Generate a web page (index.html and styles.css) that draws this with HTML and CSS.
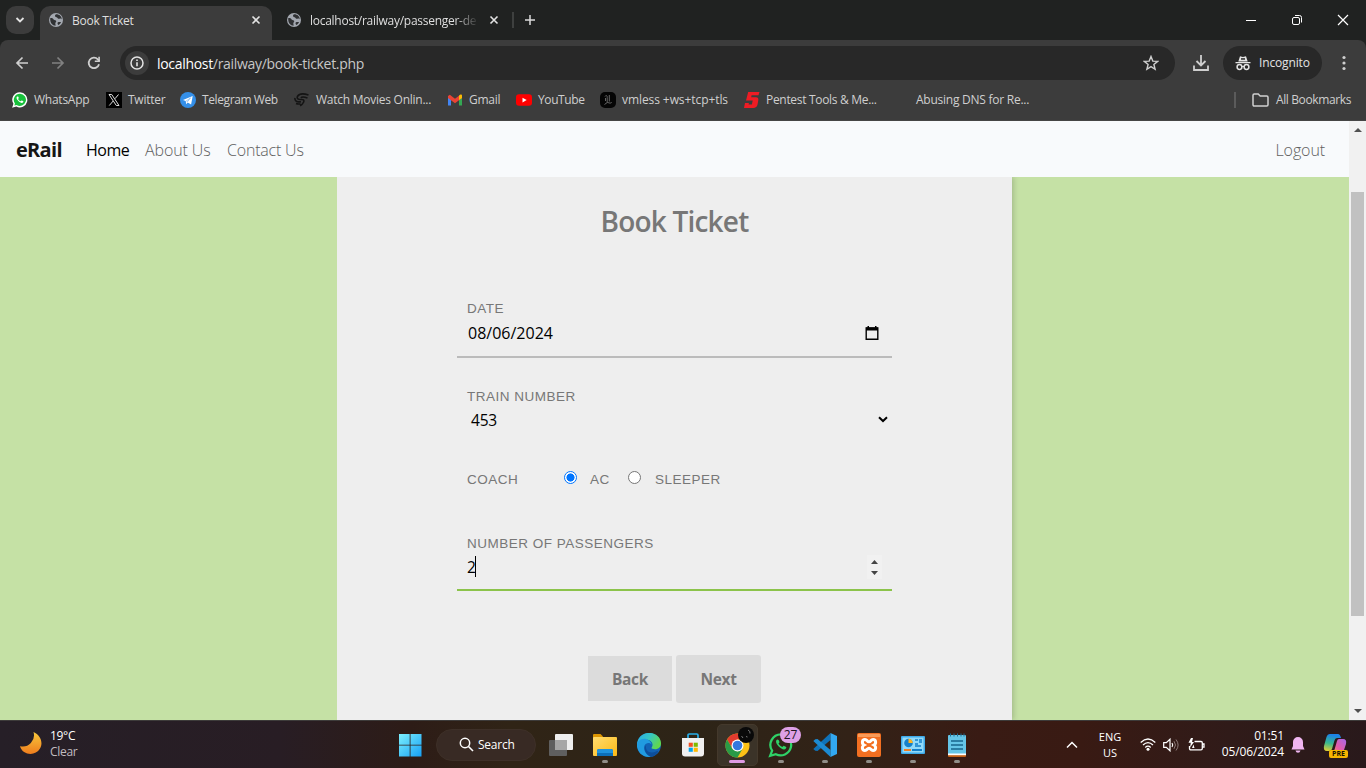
FILE: index.html
```html
<!DOCTYPE html>
<html lang="en">
<head>
<meta charset="utf-8">
<title>Book Ticket</title>
<link rel="stylesheet" href="styles.css">
</head>
<body>
<svg class="defs" width="0" height="0">
  <defs>
    <symbol id="globe" viewBox="0 0 14 14"><circle cx="7" cy="7" r="7" fill="#a3a8b0"/><path d="M1.200 5.200c1.600-.3 2.500.2 3.400 1.200 1 .9 2.400.4 2.600 1.500.2 1-.9 1.300-.9 2.300 0 .8.4 1.500.3 2.500C3.400 12.500 1 10 1.200 5.200zM7 1.300c-.8.9-1.300 1.300-.8 2.200.6.9 2 .5 2.300 1.400.3.8 1.700 1.100 2.500.7.8-.4 1.400 0 1.700.8.1-2.900-2.300-5.200-5.700-5.100zM9 9.300c1-.4 2.200 0 3-.4-.4 1.300-1.400 2.500-2.700 3-.7-.8-1.200-2-.3-2.600z" fill="#303234"/></symbol>
    <symbol id="cross" viewBox="0 0 10 10"><path d="M1.500 1.500l7 7M8.500 1.500l-7 7" stroke="#e3e3e3" stroke-width="1.600" fill="none"/></symbol>
    <symbol id="phone" viewBox="1.300 1.300 21.600 21.600"><path d="M12 1.500A10.300 10.300 0 0 0 3.200 17.200L1.500 22.600l5.600-1.600A10.300 10.300 0 1 0 12 1.500z" fill="#fff"/><path d="M12.100 3.700A8.200 8.200 0 0 0 5.300 16.700l-.8 2.900 3-.8A8.200 8.200 0 1 0 12.100 3.700z" fill="#18c13c"/><path d="M8.500 7.300c-1.700.7-1.400 3.200 1.200 5.900 2.600 2.800 5.300 3.700 6.600 2.100.6-.8.500-1.400-.1-1.700l-2-.9-1.200 1.200c-1.700-.7-2.800-1.900-3.500-3.200l1-1.300-.9-2z" fill="#fff"/></symbol>
    <linearGradient id="win" x1="0" y1="0" x2="1" y2="1"><stop offset="0" stop-color="#7df0fd"/><stop offset="1" stop-color="#16a0f5"/></linearGradient>
    <linearGradient id="moon" x1="0" y1="0" x2="0" y2="1"><stop offset="0" stop-color="#f8c83c"/><stop offset="1" stop-color="#ef7d1d"/></linearGradient>
    <linearGradient id="folder" x1="0" y1="0" x2="1" y2="1"><stop offset="0" stop-color="#ffdc70"/><stop offset="1" stop-color="#fcb915"/></linearGradient>
    <linearGradient id="edgeTop" x1="0" y1="0" x2="1" y2=".5"><stop offset="0" stop-color="#2aa8e8"/><stop offset=".5" stop-color="#35c6c5"/><stop offset="1" stop-color="#61d84c"/></linearGradient>
    <linearGradient id="copA" x1=".2" y1="0" x2="0" y2="1"><stop offset="0" stop-color="#1c83e8"/><stop offset=".5" stop-color="#38b98e"/><stop offset="1" stop-color="#f2d12c"/></linearGradient>
    <linearGradient id="copB" x1="1" y1="0" x2="0" y2="1"><stop offset="0" stop-color="#a768ea"/><stop offset=".6" stop-color="#e65ba5"/><stop offset="1" stop-color="#f89a4d"/></linearGradient>
  </defs>
</svg>

<header class="tabs">
  <button class="tab-search"><svg width="10" height="8" viewBox="0 0 10 8"><path d="M1.500 2l3.500 3.500L8.500 2" fill="none" stroke="#e3e3e3" stroke-width="1.800"/></svg></button>
  <div class="tab active"><svg class="fav"><use href="#globe"/></svg><span class="t-active">Book Ticket</span><svg class="close"><use href="#cross"/></svg></div>
  <div class="tab"><svg class="fav"><use href="#globe"/></svg><span class="fade">localhost/railway/passenger-de</span><svg class="close"><use href="#cross"/></svg></div>
  <i class="tab-rule"></i>
  <svg class="plus" width="12" height="12" viewBox="0 0 12 12"><path d="M6 1v10M1 6h10" stroke="#dadada" stroke-width="1.500"/></svg>
  <div class="window-buttons">
    <svg width="12" height="12" viewBox="0 0 12 12"><path d="M1 6.500h10" stroke="#fff"/></svg>
    <svg width="12" height="12" viewBox="0 0 12 12"><rect x="1.500" y="3.500" width="7" height="7" rx="1.500" fill="none" stroke="#fff"/><path d="M4 1.500h4.500a2 2 0 0 1 2 2V8.500" fill="none" stroke="#fff"/></svg>
    <svg width="12" height="12" viewBox="0 0 12 12"><path d="M1 1l10 10M11 1L1 11" stroke="#fff" stroke-width="1.200"/></svg>
  </div>
</header>

<div class="toolbar">
  <svg class="tool" viewBox="0 0 14 14"><path d="M7.500 1.500L2 7l5.500 5.500M2 7h11" fill="none" stroke="#cfcfcf" stroke-width="1.700"/></svg>
  <svg class="tool" viewBox="0 0 14 14"><path d="M6.500 1.500L12 7l-5.500 5.500M12 7H1" fill="none" stroke="#818181" stroke-width="1.700"/></svg>
  <svg class="tool" viewBox="0 0 14 14"><path d="M12 8.200A5.200 5.200 0 1 1 10.800 3.400L12.500 5" fill="none" stroke="#cfcfcf" stroke-width="1.800"/><path d="M12.900.8v5.100H7.800V4.500h3.500V.8z" fill="#cfcfcf"/></svg>
  <div class="omnibox">
    <span class="info"><svg width="14" height="14" viewBox="0 0 14 14"><circle cx="7" cy="7" r="6" fill="none" stroke="#e3e3e3" stroke-width="1.500"/><path d="M7 6.200v4M7 3.500v1.500" stroke="#e3e3e3" stroke-width="1.600"/></svg></span>
    <span class="url"><b>localhost</b>/railway/book-ticket.php</span>
    <svg class="star" width="16" height="16" viewBox="0 0 16 16"><path d="M8 1.500l1.800 4.600 4.900.3-3.800 3.100 1.200 4.800L8 11.600l-4.100 2.700 1.200-4.800-3.800-3.100 4.900-.3z" fill="none" stroke="#cfcfcf" stroke-width="1.400"/></svg>
  </div>
  <svg class="download" width="18" height="18" viewBox="0 0 18 18"><path d="M9 1v10.500M4.500 7L9 11.500 13.500 7M2 11.500V16h14v-4.500" fill="none" stroke="#cfcfcf" stroke-width="1.800"/></svg>
  <div class="incognito"><svg width="16" height="16" viewBox="0 0 16 16"><path d="M3.300 6.500L5 1.200l3 .8 3-.8 1.700 5.300zM.5 6.900h15v1.300H.5z" fill="#e3e3e3"/><path d="M6 3.200h4v1.500H6z" fill="#282828"/><circle cx="4.500" cy="12" r="2.400" fill="none" stroke="#e3e3e3" stroke-width="1.500"/><circle cx="11.500" cy="12" r="2.400" fill="none" stroke="#e3e3e3" stroke-width="1.500"/><path d="M6.800 11.700q1.200-.8 2.400 0" stroke="#e3e3e3" fill="none"/></svg><span>Incognito</span></div>
  <svg class="menu" width="4" height="16" viewBox="0 0 4 16"><g fill="#cfcfcf"><circle cx="2" cy="2.500" r="1.600"/><circle cx="2" cy="8" r="1.600"/><circle cx="2" cy="13.500" r="1.600"/></g></svg>
</div>

<nav class="bookmarks">
  <a class="b1"><svg><use href="#phone"/></svg><span>WhatsApp</span></a>
  <a class="b2"><svg viewBox="0 0 16 16"><path d="M0 0h16v16H0z" fill="#000"/><path d="M3 2.500h2.700l7.300 11h-2.700zM12.500 2.500L9 6.700M7.200 9L3.300 13.500" fill="none" stroke="#ddd" stroke-width="1"/></svg><span>Twitter</span></a>
  <a class="b3"><svg viewBox="0 0 16 16"><circle cx="8" cy="8" r="8" fill="#348fe8"/><path d="M3 8l9.700-4-1.600 8.500-3.400-2-1.500 1.700-.5-3.100z" fill="#fff"/><path d="M6 9.200l4.600-3.400-3.400 4.300" stroke="#9ec9f4" fill="none"/></svg><span>Telegram Web</span></a>
  <a class="b4"><svg viewBox="0 0 16 16"><path d="M14.500 3C9 1.200 5 2 3.600 4.200 2.300 6.700 4.500 7.700 7 7.500c2.500-.2 3.500.8 2.500 2.800-.7 1.600-2 2.700-3.400 3.500M13.500 6C10 4.800 7.500 4.800 7 6M1 6c-.5 3 2 4.500 6 3.700M2 11.500c1.500.6 3 .7 4.500.2" fill="none" stroke="#141414" stroke-width="1.600"/></svg><span>Watch Movies Onlin...</span></a>
  <a class="b5"><svg viewBox="0 0 16 16"><path d="M1 4v9.500h3V7z" fill="#4285f4"/><path d="M12 7v6.500h3V4z" fill="#34a853"/><path d="M1 4v2l7 5.200L15 6V3.700L13.200 2.800 8 6.800 2.800 2.800z" fill="#ea4335"/><path d="M12 3.700v4.400L15 6V3.800c0-1.600-1.700-1.900-3-.1z" fill="#fbbc04"/></svg><span>Gmail</span></a>
  <a class="b6"><svg viewBox="0 0 16 16"><rect y="2.300" width="16" height="11.500" rx="3" fill="#f00"/><path d="M6.500 5.700v4.800L10.700 8z" fill="#fff"/></svg><span>YouTube</span></a>
  <a class="b7"><svg viewBox="0 0 16 16"><rect width="16" height="16" rx="5" fill="#050505"/><path d="M5 4.500c.5-1.500 2.700-1 2.200.8v5.200c1-.3 2.500 1.500 4.500 0M4.500 12.500l2.700-2M9.300 3v6.500M5.500 6v3" fill="none" stroke="#666" stroke-width="1"/></svg><span>vmless +ws+tcp+tls</span></a>
  <a class="b8"><svg viewBox="0 0 16 16"><path d="M4.200 0H15.500l-1 3.300H7.600l-.4 2h4.700c2 0 2.700 1 2.400 2.900l-.7 4C13.100 14.800 11.500 16 9.300 16H0l1-5h3.900l-.3 1.500h3.300l.8-4H2z" fill="#ee1c24"/></svg><span>Pentest Tools &amp; Me...</span></a>
  <a class="b9"><span>Abusing DNS for Re...</span></a>
  <i class="mark-rule"></i>
  <a class="all"><svg viewBox="0 0 17 14"><path d="M1 2.200Q1 1 2.200 1h4l2 2h6.600Q16 3 16 4.200v7.600q0 1.200-1.200 1.200H2.200Q1 13 1 11.800z" fill="none" stroke="#cfcfcf" stroke-width="1.500"/></svg><span>All Bookmarks</span></a>
</nav>

<section class="viewport">
  <div class="page">
    <nav class="site-nav"><a class="brand">eRail</a><a class="home">Home</a><a class="about">About Us</a><a class="contact">Contact Us</a><a class="logout">Logout</a></nav>
    <main class="backdrop">
      <form class="card">
        <h2>Book Ticket</h2>
        <div class="field date"><label>DATE</label><div class="value"><span class="date-text">08/06/2024</span><svg class="cal" width="14" height="15" viewBox="0 0 14 15"><path d="M1.200 2h11.600v11.300H1.200z" fill="none" stroke="#000" stroke-width="1.400"/><path d="M1 1.500h12v3H1zM2.500 0h1.500v2H2.500zM10 0h1.500v2H10z"/></svg></div></div>
        <div class="field train"><label>TRAIN NUMBER</label><div class="value"><span class="train-text">453</span><svg class="caret" width="10" height="7" viewBox="0 0 10 7"><path d="M1 1.200l4 3.800 4-3.800" fill="none" stroke="#000" stroke-width="2"/></svg></div></div>
        <div class="coach"><label>COACH</label><i class="radio checked"></i><label class="ac">AC</label><i class="radio"></i><label class="sleeper">SLEEPER</label></div>
        <div class="field count"><label>NUMBER OF PASSENGERS</label><div class="value"><span>2</span><i class="cursor"></i><span class="spinner"><svg width="7" height="15" viewBox="0 0 7 15"><path d="M0 4L3.500 0 7 4zM0 11l3.500 4L7 11z" fill="#444"/></svg></span></div></div>
        <div class="actions"><span class="btn back">Back</span><span class="btn next">Next</span></div>
      </form>
    </main>
  </div>
  <aside class="scrollbar"><i class="up"></i><i class="thumb"></i><i class="down"></i></aside>
</section>

<footer class="taskbar">
  <div class="weather"><svg width="24" height="24" viewBox="0 0 24 24"><path d="M14.500 1A11.300 11.300 0 0 1 1 15.200C3.500 24 16 26 21 17.600 24.500 11.500 21.500 4 14.500 1z" fill="url(#moon)"/></svg><div><p class="temp">19°C</p><p class="sky">Clear</p></div></div>
  <div class="apps">
    <div class="app"><svg width="24" height="24"><path d="M1 1h10.700v10.700H1zM12.500 1h11v10.700h-11zM1 12.500h10.700v11H1zM12.500 12.500h11v11h-11z" fill="url(#win)"/></svg></div>
    <div class="search"><svg width="15" height="15" viewBox="0 0 15 15"><circle cx="6" cy="6" r="4.700" fill="none" stroke="#fff" stroke-width="1.500"/><path d="M9.500 9.500l4.500 4.500" stroke="#fff" stroke-width="1.600"/></svg><span>Search</span></div>
    <div class="app"><svg width="24" height="24"><rect x="6" y="1" width="18" height="16" rx="1" fill="#eee"/><rect y="7" width="18" height="16" rx="1" fill="#5f5f5f"/><path d="M6 7h12v10H6z" fill="#a6a6a6"/></svg></div>
    <div class="app open"><svg width="24" height="24"><path d="M0 2q0-1 1-1h6.500l2.500 2.500V7H0z" fill="#dc9502"/><rect y="4" width="24" height="19" rx="1" fill="url(#folder)"/><path d="M4 23v-5q0-2 2-2h12q2 0 2 2v5z" fill="#0c6fb8"/><path d="M4 20v-2q0-2 2-2h12q2 0 2 2v2z" fill="#1f93dd"/></svg></div>
    <div class="app"><svg width="24" height="24"><circle cx="12" cy="12" r="12" fill="#1263b5"/><path d="M0 12C.5-4 23-3.500 24 10c.2 5-4 7-8.300 5.800-1.800-.5-1-1.300-.5-2.300C17 9 11.500 5.200 7 7.500 3 9.400 1.500 13 3.500 17 1.500 15.700 0 14 0 12z" fill="url(#edgeTop)"/><path d="M0 12c0-4 5-7.200 9.500-5.800 3 .9 5 3 5.100 5.700-1.200-2.500-5.800-2.600-7.200.8-1.500 4 1.600 9.400 6.600 11.100C5.500 24.800 0 19 0 12z" fill="#219be0"/><path d="M9.300 11.800c-2 5.700 3.800 10 10.200 6.500.8-.4 2-.2 1.500.6A11.500 11.500 0 0 1 14.800 24C9 22.500 5.500 15.500 9.300 11.800z" fill="#0d4e9b"/></svg></div>
    <div class="app"><svg width="24" height="24"><path d="M7 6V2.200Q7 1 8.200 1h7.600Q17 1 17 2.200V6" fill="none" stroke="#28afea" stroke-width="1.700"/><path d="M1 5h22v15.500q0 3-3 3H4q-3 0-3-3z" fill="#f0f0f0"/><path d="M7.700 9.700h4.100v4.100H7.700z" fill="#f25022"/><path d="M12.700 9.700h4.100v4.100h-4.100z" fill="#7fba00"/><path d="M7.700 14.700h4.100v4.100H7.700z" fill="#00a4ef"/><path d="M12.700 14.700h4.100v4.100h-4.100z" fill="#ffb900"/></svg></div>
    <div class="app open current"><svg class="chrome" width="28" height="28" viewBox="0 0 28 28"><circle cx="13.500" cy="15.500" r="12" fill="#fbc116"/><path d="M3.100 9.500A12 12 0 0 1 23.900 9.500H13.500L8.300 18.500z" fill="#e33b2e"/><path d="M3.100 9.500A12 12 0 0 0 13.500 27.500l5.200-9-5.200 3-5.200-3z" fill="#299b47"/><circle cx="13.500" cy="15.500" r="6" fill="#fff"/><circle cx="13.500" cy="15.500" r="4.800" fill="#3478df"/></svg><svg class="avatar" width="16" height="16" viewBox="0 0 16 16"><circle cx="8" cy="8" r="8" fill="#090909"/><path d="M10 3q2.500 1 2 3.500M3.500 9l1.500 2M8 9.500l1.500.5" stroke="#777" fill="none"/></svg></div>
    <div class="app open"><svg width="26" height="26" viewBox="0 0 24 24"><path d="M12 2.200A9.700 9.700 0 0 0 3.800 17.200L2 22l5.200-1.500A9.700 9.700 0 1 0 12 2.200z" fill="none" stroke="#2fd267" stroke-width="2.100"/><path d="M8.500 7c-1.700.7-1.400 3.400 1.200 6.200 2.600 2.800 5.500 3.700 6.800 2.100.6-.8.500-1.400-.1-1.700l-2-.9-1.200 1.200c-1.700-.7-2.800-1.900-3.500-3.200l1-1.300-.9-2z" fill="#2fd267"/></svg><span class="badge">27</span></div>
    <div class="app open"><svg width="24" height="24"><path d="M17.500 0v7L4.500 18l-2.200-.2L.3 16z" fill="#0f72b8"/><path d="M17.500 24v-7L4.500 6l-2.200.2L.3 8z" fill="#1c8ad2"/><path d="M17.500 0L24 3v18l-6.500 3z" fill="#32a8f1"/></svg></div>
    <div class="app open"><svg width="24" height="24"><rect width="24" height="24" rx="2" fill="#f36f21"/><path d="M1 1h22v3H1z" fill="#fa9b58"/><path d="M8 6.500c2.300 0 2 2.300 4 2.300s1.700-2.300 4-2.300c3.400 0 3.200 4.300 1 5.500 2.200 1.200 2.400 5.500-1 5.500-2.300 0-2-2.300-4-2.300s-1.700 2.300-4 2.300c-3.400 0-3.200-4.300-1-5.500-2.200-1.200-2.400-5.500 1-5.500z" fill="none" stroke="#fff" stroke-width="3"/></svg></div>
    <div class="app open"><svg width="24" height="24"><rect y="3" width="24" height="18" rx="1" fill="#3eabea"/><rect x="1.500" y="4.500" width="21" height="15" fill="#91dafa"/><circle cx="7.500" cy="10" r="4.300" fill="#1580ca"/><path d="M7.500 10V5.700a4.300 4.300 0 0 1 4.300 4.300z" fill="#ffb321"/><path d="M14 7h3m1 0h3M14 11h3m1-2h3M14 13h6" stroke="#1580ca" stroke-width="1.500"/><path d="M3 16h7v2H3z" fill="#f47f21"/><path d="M11 16h10v2H11z" fill="#1580ca"/></svg></div>
    <div class="app open"><svg width="24" height="24"><rect x="3" y="2" width="18" height="20" rx="1" fill="#65c5e7"/><path d="M3 21h18v2q0 1-1 1H4q-1 0-1-1z" fill="#c46116"/><path d="M3 20.500h18v1.700H3z" fill="#fff"/><path d="M5.500.5v3M9 .5v3M12.500.5v3M16 .5v3M19 .5v3" stroke="#1c6f96"/><path d="M6 8h12M6 12h12M6 16h12" stroke="#17658d" stroke-width="1.700"/></svg></div>
  </div>
  <div class="tray">
    <svg class="chev" width="12" height="8" viewBox="0 0 12 8"><path d="M1 6.500l5-5 5 5" fill="none" stroke="#fff" stroke-width="1.500"/></svg>
    <div class="lang"><p>ENG</p><p>US</p></div>
    <svg class="wifi" width="16" height="13" viewBox="0 0 16 13"><path d="M.7 4.500q7.300-7 14.600 0M3 7q5-4.700 10 0M5.300 9.400q2.700-2.500 5.400 0" fill="none" stroke="#fff" stroke-width="1.300"/><circle cx="8" cy="11.200" r="1.500" fill="#fff"/></svg>
    <svg class="sound" width="16" height="14" viewBox="0 0 16 14"><path d="M.7 4.700h2.600L7 1.200v11.600L3.300 9.300H.7z" fill="none" stroke="#fff" stroke-width="1.200"/><path d="M9 5q1.500 2 0 4" fill="none" stroke="#fff" stroke-width="1.200"/><path d="M11 3.200q3 3.800 0 7.600M13 1.500q4.200 5.500 0 11" fill="none" stroke="#8b7977"/></svg>
    <svg class="battery" width="17" height="14" viewBox="0 0 17 14"><path d="M6.500 3.500h6.500q1.300 0 1.300 1.300v5.700q0 1.300-1.300 1.300H2.800q-1.300 0-1.300-1.300V8M14.800 6h1.200v3.200h-1.200" fill="none" stroke="#fff" stroke-width="1.300"/><path d="M3 0L.5 4.800h2.300L2 9.500l4-5.500H4l1-4zM5.500 6.500L4 10h2.500z" fill="#fff"/></svg>
    <div class="clock"><p>01:51</p><p>05/06/2024</p></div>
    <svg class="bell" width="14" height="16" viewBox="0 0 14 16"><path d="M7 0a5 5 0 0 0-5 5v4L.5 12.500h13L12 9V5a5 5 0 0 0-5-5zM4.500 13.500h5Q9 15.700 7 15.700T4.500 13.500z" fill="#f0b6f1"/></svg>
    <div class="copilot"><svg width="24" height="24" viewBox="0 0 24 24"><path d="M7 1h8q2 0 3 4h-4q-2 0-2.700 3L9 16q-.5 2-3 2H4Q0 18 1 13L3.500 4Q4.500 1 7 1z" fill="url(#copA)"/><path d="M16 6h4q4 0 3 5l-2 6q-1 3-4 3H9q2-1 2.700-4L14 8q.5-2 2-2z" fill="url(#copB)"/></svg><b>PRE</b></div>
  </div>
</footer>
</body>
</html>
```
FILE: styles.css
```css
* { box-sizing: border-box; }
body { margin: 0; width: 1366px; height: 768px; overflow: hidden; display: flex; flex-direction: column; background: #202221; font: 12px/16px "Open Sans", "Noto Sans", sans-serif; }
p, h2 { margin: 0; }
svg { display: block; flex: none; }
span, a { white-space: nowrap; }
.defs { width: 0; height: 0; }

/* tab strip */
.tabs { height: 40px; flex: none; display: flex; align-items: center; background: #202221; color: #dfdfdf; }
.tab-search { width: 28px; height: 28px; margin: 0 6px; padding: 0; border: 0; border-radius: 10px; background: #3c3c3c; display: grid; place-items: center; }
.tab { width: 232px; height: 34px; margin-top: 6px; padding: 2px 11px 6px 9px; display: flex; align-items: center; }
.tab + .tab { width: 240px; padding-left: 15px; padding-right: 13px; }
.tab.active { background: #3c3c3c; border-radius: 10px 10px 0 0; }
.fav { width: 14px; height: 14px; margin-right: 9px; margin-bottom: 2px; }
.close { width: 10px; height: 10px; margin-left: auto; margin-bottom: 2px; }
.t-active { letter-spacing: -.25px; }
.fade { letter-spacing: -.27px; -webkit-mask-image: linear-gradient(90deg, #000 145px, transparent 169px); }
.tab-rule { width: 2px; height: 16px; background: #3e403f; }
.plus { margin-left: 10px; }
.window-buttons { display: flex; gap: 34px; margin-left: auto; margin-right: 17px; }

/* toolbar */
.toolbar { height: 40px; flex: none; display: flex; align-items: center; padding: 6px 20px 0 15px; background: #3c3c3c; border-radius: 8px 8px 0 0; }
.tool { width: 14px; height: 14px; margin-right: 22px; }
.omnibox { width: 1055px; height: 34px; margin-left: -3px; padding: 0 16px 0 5px; border-radius: 17px; background: #282828; display: flex; align-items: center; }
.info { width: 24px; height: 24px; border-radius: 50%; background: #3c3c3c; display: grid; place-items: center; }
.url { margin: 1px 0 0 8px; font-size: 14px; color: #c7c7c7; letter-spacing: -.31px; }
.url b { font-weight: 400; color: #fff; }
.star { margin-left: auto; }
.download { margin-left: 17px; }
.incognito { width: 99px; height: 34px; margin-left: 13px; padding-left: 12px; border-radius: 17px; background: #282828; color: #e3e3e3; display: flex; align-items: center; gap: 8px; letter-spacing: -.15px; }
.menu { margin-left: 20px; }

/* bookmarks */
.bookmarks { height: 41px; flex: none; display: flex; align-items: center; padding: 0 0 1px 12px; background: #3c3c3c; border-bottom: 1px solid #454545; color: #cfcfcf; letter-spacing: -.25px; }
.bookmarks a { display: flex; align-items: center; gap: 6px; }
.bookmarks svg { width: 16px; height: 16px; }
.b1 { width: 94px; } .b2 { width: 74px; } .b3 { width: 114px; letter-spacing: -.4px; } .b4 { width: 153px; } .b5 { width: 69px; } .b6 { width: 84px; letter-spacing: -.4px; } .b7 { width: 144px; letter-spacing: -.08px; } .b8 { width: 172px; letter-spacing: -.31px; } .b9 { width: 318px; }
.mark-rule { width: 2px; height: 16px; background: #5b5b5b; margin-right: 16px; }
.bookmarks .all { gap: 7px; letter-spacing: -.38px; }
.bookmarks .all svg { width: 17px; height: 14px; }

/* site */
.viewport { height: 599px; flex: none; display: flex; }
.page { width: 1349px; }
.site-nav { height: 56px; display: flex; align-items: center; padding: 1px 24px 0 16px; background: #f8fafc; font-size: 16px; font-weight: 300; color: #606060; letter-spacing: -.1px; }
.brand { width: 70px; font-size: 20px; font-weight: 700; color: #161616; letter-spacing: -.7px; }
.home { width: 59px; color: #000; font-weight: 400; letter-spacing: -.5px; }
.about { width: 82px; }
.contact { letter-spacing: -.2px; }
.logout { margin-left: auto; }
.backdrop { height: 543px; padding-left: 337px; background: #c5e1a5; overflow: hidden; }
.card { width: 675px; height: 543px; padding: 0 120px; background: #eee; color: #000; box-shadow: 2px 0 5px rgba(0,0,0,.16); clip-path: inset(0 -12px 0 0); }
h2 { height: 90px; line-height: 89px; font-size: 28px; font-weight: 600; color: #777; text-align: center; letter-spacing: -.8px; }
.card label { display: block; padding-left: 10px; height: 24px; font: 13.500px/25px "Liberation Sans", Arial, sans-serif; letter-spacing: .5px; color: #777; }
.value { display: flex; align-items: center; height: 24px; padding: 0 13px 0 10px; font-size: 15.500px; }
.date { margin-top: 29px; border-bottom: 2px solid #bbb; padding-bottom: 10px; }
.date .value { height: 26px; padding-left: 11px; font-size: 16px; }
.cal { margin-left: auto; }
.train { margin-top: 26px; }
.train .value { padding: 0 4px 0 14px; letter-spacing: -.2px; }
.caret { margin-left: auto; margin-bottom: 2px; }
.coach { margin-top: 35px; height: 24px; display: flex; align-items: center; }
.coach label:first-child { width: 107px; }
.radio { width: 13px; height: 13px; margin-bottom: 3px; border: 1px solid #767676; border-radius: 50%; background: #fff; }
.radio.checked { border-color: #0075ff; background: radial-gradient(circle, #0075ff 3.800px, #fff 4.300px); }
.card .ac { width: 51px; padding-left: 13px; }
.card .sleeper { padding-left: 14px; }
.count { margin-top: 40px; padding-bottom: 10px; border-bottom: 2px solid #8bc34a; }
.cursor { width: 1px; height: 21px; margin-left: -1px; margin-bottom: 1px; background: #000; }
.spinner { width: 15px; height: 24px; margin-left: auto; margin-right: -3px; background: #f1f1f1; display: grid; place-items: center; }
.actions { display: flex; justify-content: center; gap: 4px; margin-top: 64px; }
.btn { display: grid; place-items: center; background: #dcdcdc; color: #777; font-size: 15.500px; font-weight: 700; letter-spacing: -.35px; }
.back { width: 84px; height: 45px; margin-top: 1px; }
.next { width: 85px; height: 48px; border-radius: 3px; }
.scrollbar { width: 17px; background: #f1f1f1; display: flex; flex-direction: column; align-items: center; }
.up, .down { border: 4px solid transparent; }
.up { border-top: 0; border-bottom: 4px solid #505050; margin-top: 7px; }
.thumb { width: 13px; height: 424px; margin-top: 60px; background: #c1c1c1; }
.down { border-bottom: 0; border-top: 4px solid #505050; margin-top: 93px; }

/* taskbar */
.taskbar { height: 48px; flex: none; display: grid; grid-template-columns: 388px 591px 387px; border-top: 1px solid #3d3b3a; background: linear-gradient(90deg, #261f27 0, #281d24 280px, #2d1c17 410px, #302416 510px, #2d2417 700px, #322217 850px, #391b14 980px, #391a13 1080px, #301b19 1230px, #29191b 100%); color: #fff; }
.weather { display: flex; gap: 7px; padding: 10px 0 0 19px; }
.weather div { margin-top: -3px; letter-spacing: -.3px; }
.sky { color: #c1bcc0; }
.apps { display: flex; align-items: center; }
.app { width: 44px; height: 47px; position: relative; display: grid; place-items: center; }
.open::after { content: ""; position: absolute; bottom: 5px; left: 19px; width: 6px; height: 3px; border-radius: 2px; background: #918e88; }
.current::before { content: ""; position: absolute; left: 2px; top: 3px; width: 39px; height: 40px; border: 1px solid #44392c; border-radius: 5px; background: #3b3328; }
.current::after { left: 14px; width: 16px; background: #df9be4; }
.chrome { position: relative; margin: -2px 0 0 1px; }
.avatar { position: absolute; left: 23px; top: 6px; }
.badge { position: absolute; left: 21px; top: 6px; width: 21px; height: 16px; border-radius: 8px; background: #dda0e6; color: #211722; text-align: center; }
.search { width: 100px; height: 32px; margin: 0 3px 0 4px; border-radius: 16px; border: 1px solid #3e3028; background: #382a24; display: flex; align-items: center; padding-left: 22px; gap: 4px; letter-spacing: -.25px; }
.tray { display: flex; align-items: center; padding-left: 87px; }
.lang { width: 30px; margin-left: 17px; text-align: center; font-size: 11px; }
.wifi { margin-left: 15px; }
.sound { margin-left: 7px; }
.battery { margin-left: 9px; }
.clock { width: 79px; margin-top: -2px; text-align: right; letter-spacing: -.15px; }
.bell { margin-left: 7px; }
.copilot { position: relative; margin-left: 18px; }
.copilot b { position: absolute; right: -1px; bottom: -1px; padding: 0 3px; border-radius: 2px; background: #f7b500; color: #171200; font-size: 7px; line-height: 8px; }
```
